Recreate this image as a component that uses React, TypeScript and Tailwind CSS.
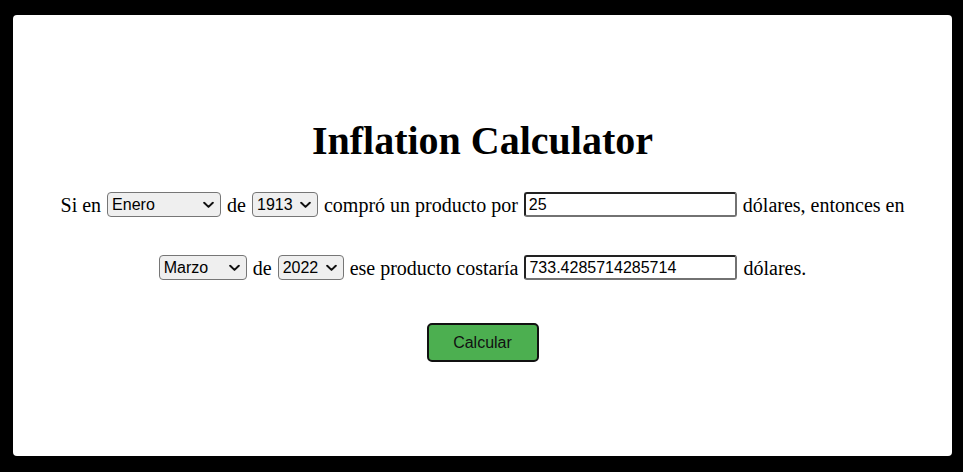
import React from "react";

function Chevron() {
  return (
    <svg width="11" height="7" viewBox="0 0 11 7" className="absolute right-[6px] top-1/2 -translate-y-1/2 pointer-events-none">
      <path d="M1.2 1.2 L5.5 5.4 L9.8 1.2" fill="none" stroke="#111" strokeWidth="2" strokeLinecap="round" strokeLinejoin="round" />
    </svg>
  );
}

function Select({ value, width }: { value: string; width: number }) {
  return (
    <span
      className="relative inline-flex items-center h-[25px] rounded-[4px] border border-[#767676] bg-[#efefef] pl-[4px] text-[16px] text-black box-border"
      style={{ width, fontFamily: '"Liberation Sans", Arial, sans-serif' }}
    >
      {value}
      <Chevron />
    </span>
  );
}

function Input({ value }: { value: string }) {
  return (
    <span
      className="inline-flex items-center h-[25px] w-[213px] rounded-[3px] border-2 border-t-[#222] border-l-[#222] border-b-[#727272] border-r-[#727272] bg-white pl-[3px] text-[16px] text-black box-border"
      style={{ fontFamily: '"Liberation Sans", Arial, sans-serif' }}
    >
      {value}
    </span>
  );
}

export default function App() {
  return (
    <div className="w-[963px] h-[472px] bg-black pt-[15px] pl-[13px]">
      <div
        className="w-[939px] h-[441px] bg-white rounded-[4px] flex flex-col items-center pt-[103px] text-black"
        style={{ fontFamily: '"Liberation Serif", "Times New Roman", serif' }}
      >
        <h1 className="h-[46px] leading-[46px] text-[40px] font-bold">Inflation Calculator</h1>
        <div className="mt-[28px] h-[25px] flex items-center justify-center gap-[6px] text-[20px] whitespace-nowrap">
          <span>Si en</span>
          <Select value="Enero" width={114} />
          <span>de</span>
          <Select value="1913" width={66} />
          <span>compró un producto por</span>
          <Input value="25" />
          <span>dólares, entonces en</span>
        </div>
        <div className="mt-[38px] h-[25px] flex items-center justify-center gap-[6px] text-[20px] whitespace-nowrap">
          <Select value="Marzo" width={88} />
          <span>de</span>
          <Select value="2022" width={66} />
          <span>ese producto costaría</span>
          <Input value="733.4285714285714" />
          <span>dólares.</span>
        </div>
        <button
          className="mt-[43px] w-[112px] h-[39px] rounded-[5px] border-2 border-[#111] bg-[#4caf50] text-[16px] text-[#111]"
          style={{ fontFamily: '"Liberation Sans", Arial, sans-serif' }}
        >
          Calcular
        </button>
      </div>
    </div>
  );
}
